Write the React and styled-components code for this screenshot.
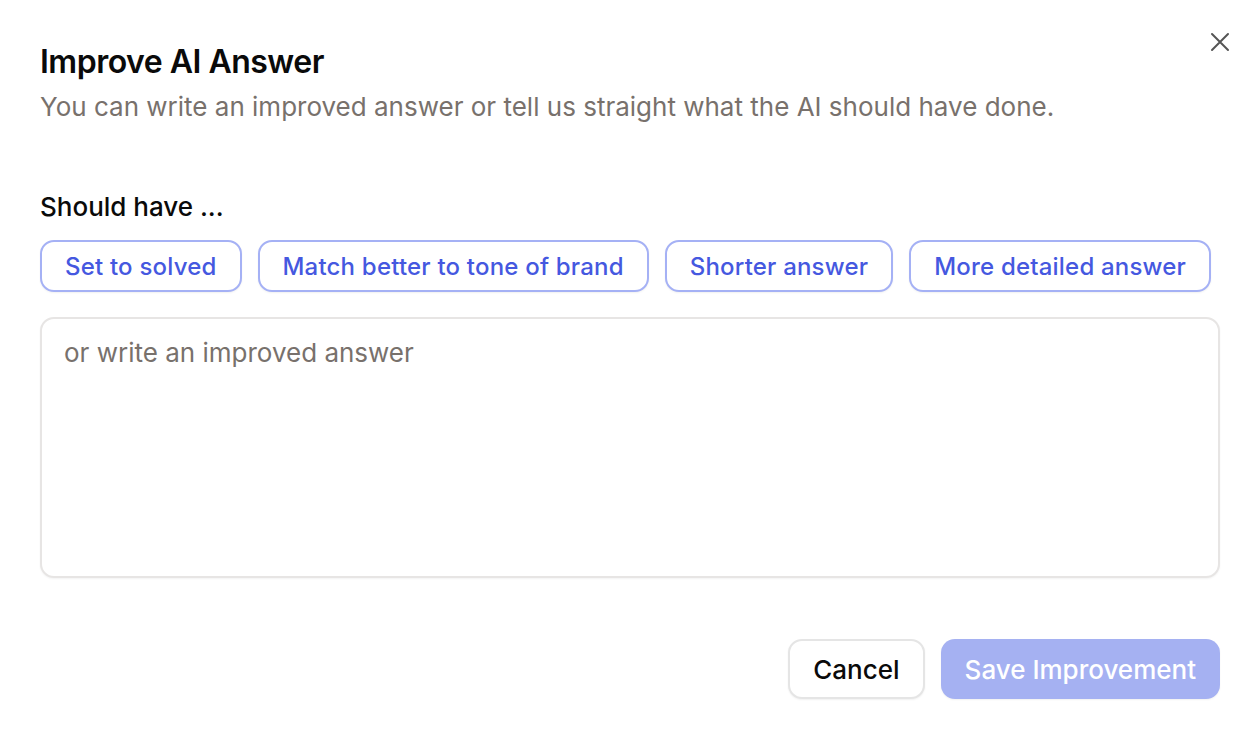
import React from 'react'
import styled, { createGlobalStyle } from 'styled-components'

const Global = createGlobalStyle`
  body {
    margin: 0;
    background: #fff;
    font-family: Inter, "Noto Sans", sans-serif;
  }
`

const Dialog = styled.div`
  position: relative;
  width: 1258px;
  height: 736px;
  box-sizing: border-box;
  padding: 40px 38px 0 40px;
  display: flex;
  flex-direction: column;
`

const Close = styled.button`
  position: absolute;
  top: 30px;
  right: 26px;
  width: 24px;
  height: 24px;
  padding: 0;
  border: none;
  background: none;
  color: #555;
  display: flex;
  align-items: center;
  justify-content: center;
`

const Title = styled.h2`
  margin: 0;
  font-size: 32px;
  line-height: 44px;
  font-weight: 600;
  letter-spacing: -0.5px;
  color: #0a0a0a;
`

const Subtitle = styled.p`
  margin: 7px 0 0;
  font-size: 26px;
  line-height: 32px;
  color: #78716c;
`

const Label = styled.div`
  margin-top: 68px;
  font-size: 26px;
  line-height: 32px;
  font-weight: 500;
  color: #0a0a0a;
`

const Chips = styled.div`
  display: flex;
  gap: 16px;
  margin-top: 17px;
`

const Chip = styled.button`
  height: 52px;
  padding: 0 23px;
  border: 2px solid #a5b1f5;
  border-radius: 14px;
  background: #fff;
  color: #4558e0;
  font-family: inherit;
  font-size: 24px;
  font-weight: 500;
  letter-spacing: 0.2px;
  box-shadow: 0 1px 2px rgba(0, 0, 0, 0.06);
`

const Field = styled.textarea`
  margin-top: 25px;
  height: 261px;
  box-sizing: border-box;
  padding: 18px 22px;
  border: 2px solid #e7e5e4;
  border-radius: 14px;
  font-family: inherit;
  font-size: 26px;
  line-height: 32px;
  resize: none;
  outline: none;
  box-shadow: 0 1px 2px rgba(0, 0, 0, 0.05);
  &::placeholder {
    color: #78716c;
  }
`

const Footer = styled.div`
  display: flex;
  justify-content: flex-end;
  gap: 16px;
  margin-top: 61px;
`

const Action = styled.button`
  height: 60px;
  padding: 0 ${p => (p.$primary ? '24px' : '23px')};
  border-radius: 14px;
  font-family: inherit;
  font-size: 26px;
  font-weight: 500;
  border: ${p => (p.$primary ? 'none' : '2px solid #e5e5e5')};
  background: ${p => (p.$primary ? '#a5b1f2' : '#fff')};
  color: ${p => (p.$primary ? '#fff' : '#0a0a0a')};
  box-shadow: 0 1px 2px rgba(0, 0, 0, 0.06);
`

const options = ['Set to solved', 'Match better to tone of brand', 'Shorter answer', 'More detailed answer']

export default function App() {
  return (
    <Dialog>
      <Global />
      <Close aria-label="Close">
        <svg width="20" height="20" viewBox="0 0 20 20" fill="none" stroke="currentColor" strokeWidth="2" strokeLinecap="round">
          <path d="M2 2 L18 18 M18 2 L2 18" />
        </svg>
      </Close>
      <Title>Improve AI Answer</Title>
      <Subtitle>You can write an improved answer or tell us straight what the AI should have done.</Subtitle>
      <Label>Should have ...</Label>
      <Chips>
        {options.map(o => (
          <Chip key={o}>{o}</Chip>
        ))}
      </Chips>
      <Field placeholder="or write an improved answer" />
      <Footer>
        <Action>Cancel</Action>
        <Action $primary>Save Improvement</Action>
      </Footer>
    </Dialog>
  )
}
